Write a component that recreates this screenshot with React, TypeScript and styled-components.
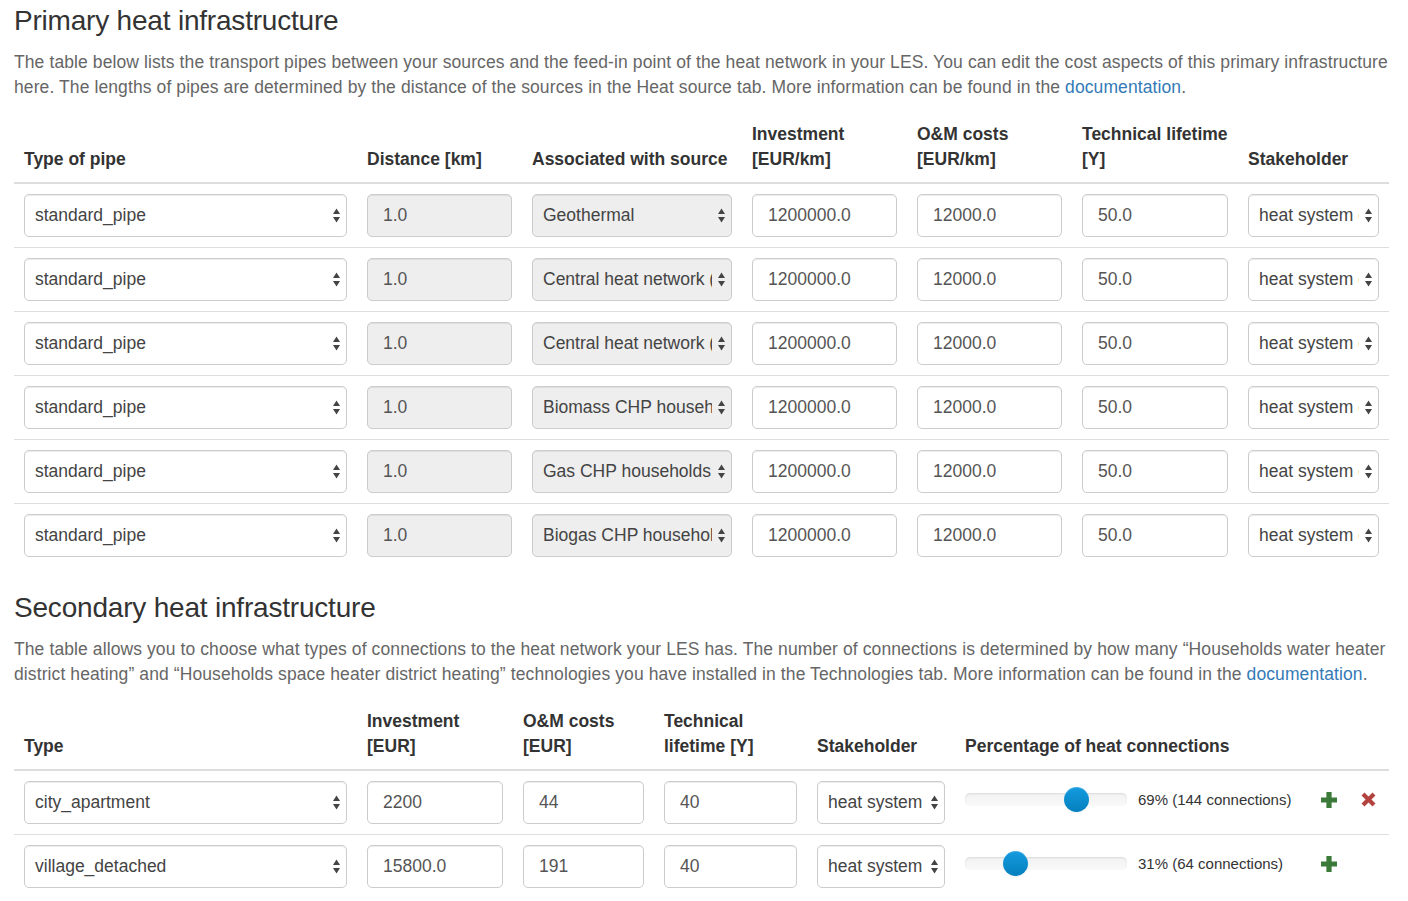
import React from "react";
import styled, { createGlobalStyle } from "styled-components";

const GlobalStyle = createGlobalStyle`
  html, body { margin: 0; padding: 0; background: #fff; }
  body {
    font-family: "Liberation Sans", Arial, Helvetica, sans-serif;
    font-size: 17.5px;
    line-height: 25px;
    color: #333;
  }
  * { box-sizing: border-box; }
`;

const Page = styled.div`
  padding: 4px 19px 0 14px;
`;

const Title = styled.h3`
  font-size: 28px;
  line-height: 33px;
  font-weight: 400;
  letter-spacing: -0.2px;
  color: #333;
  margin: 0 0 12.5px;
  white-space: nowrap;
`;

const Lead = styled.p`
  margin: 0 0 12.5px;
  color: #666;
  font-size: 17.5px;
  line-height: 25px;
  letter-spacing: 0.1px;
  white-space: nowrap;
`;

const Link = styled.a`
  color: #337ab7;
  text-decoration: none;
`;

const Table = styled.table`
  width: 100%;
  border-collapse: collapse;
  table-layout: fixed;
  margin: 0 0 24px;
`;

const Col = styled.col<{ $w?: number }>`
  width: ${(p) => (p.$w ? `${p.$w}px` : "auto")};
`;

const Th = styled.th`
  text-align: left;
  vertical-align: bottom;
  padding: 10px;
  border-bottom: 2px solid #ddd;
  font-weight: 700;
  line-height: 25px;
  color: #333;
  white-space: nowrap;
`;

const Td = styled.td`
  padding: 10px;
  border-top: 1px solid #ddd;
  vertical-align: middle;
`;

const TextInput = styled.input<{ $disabled?: boolean }>`
  display: block;
  width: 100%;
  height: 43px;
  padding: 0 15px;
  font-family: inherit;
  font-size: 17.5px;
  color: #555;
  background: ${(p) => (p.$disabled ? "#eee" : "#fff")};
  border: 1px solid #ccc;
  border-radius: 5px;
  box-shadow: inset 0 1px 1px rgba(0, 0, 0, 0.075);
  outline: none;
`;

const SelectBox = styled.div<{ $disabled?: boolean }>`
  display: flex;
  align-items: center;
  width: 100%;
  height: 43px;
  padding: 0 6px 0 10px;
  background: ${(p) => (p.$disabled ? "#eee" : "#fff")};
  border: 1px solid #ccc;
  border-radius: 5px;
  box-shadow: inset 0 1px 1px rgba(0, 0, 0, 0.075);
  color: #444;
  font-size: 17.5px;
`;

const SelectText = styled.span`
  flex: 1;
  min-width: 0;
  overflow: hidden;
  white-space: nowrap;
`;

const Arrows = styled.svg`
  flex: 0 0 auto;
  margin-left: 6px;
  display: block;
`;

const SliderRow = styled.div`
  display: flex;
  align-items: center;
  height: 43px;
  padding-bottom: 6px;
`;

const Track = styled.div`
  position: relative;
  flex: 0 0 162px;
  height: 13px;
  border-radius: 5px;
  background: linear-gradient(#f2f2f2, #f9f9f9);
  box-shadow: inset 0 1px 2px rgba(0, 0, 0, 0.1);
`;

const Thumb = styled.div`
  position: absolute;
  top: 50%;
  width: 25px;
  height: 25px;
  margin: -12.5px 0 0 -12.5px;
  border-radius: 50%;
  background: linear-gradient(#149bdf, #0480be);
  box-shadow: inset 0 1px 0 rgba(255, 255, 255, 0.2), 0 1px 2px rgba(0, 0, 0, 0.05);
`;

const ConnLabel = styled.span`
  flex: 0 0 172px;
  margin-left: 11px;
  font-size: 15px;
  color: #333;
  white-space: nowrap;
`;

const IconButton = styled.span<{ $gap: number }>`
  display: flex;
  margin-left: ${(p) => p.$gap}px;
  cursor: pointer;
`;

const SelectArrows = () => (
  <Arrows width="7" height="15" viewBox="0 0 7 15">
    <path d="M3.5 0.5 L7 6 H0 Z" fill="#444" />
    <path d="M3.5 14.5 L7 9 H0 Z" fill="#444" />
  </Arrows>
);

const Select = ({ value, disabled }: { value: string; disabled?: boolean }) => (
  <SelectBox $disabled={disabled}>
    <SelectText>{value}</SelectText>
    <SelectArrows />
  </SelectBox>
);

const PlusIcon = () => (
  <svg width="16" height="16" viewBox="0 0 16 16">
    <path d="M5.4 0h5.2v5.4H16v5.2h-5.4V16H5.4v-5.4H0V5.4h5.4z" fill="#3b7a39" />
  </svg>
);

const RemoveIcon = () => (
  <svg width="15" height="15" viewBox="0 0 15 15">
    <path d="M2 2 L13 13 M13 2 L2 13" stroke="#b2433f" strokeWidth="4.2" />
  </svg>
);

const primaryRows = [
  "Geothermal",
  "Central heat network (primary)",
  "Central heat network (secondary)",
  "Biomass CHP households",
  "Gas CHP households",
  "Biogas CHP households",
];

const secondaryRows = [
  { type: "city_apartment", inv: "2200", om: "44", life: "40", pct: 69, conn: 144, removable: true },
  { type: "village_detached", inv: "15800.0", om: "191", life: "40", pct: 31, conn: 64, removable: false },
];

export default function App() {
  return (
    <Page>
      <GlobalStyle />
      <Title>Primary heat infrastructure</Title>
      <Lead>
        The table below lists the transport pipes between your sources and the feed-in point of the heat network in your LES. You can edit the cost aspects of this primary infrastructure
        <br />
        here. The lengths of pipes are determined by the distance of the sources in the Heat source tab. More information can be found in the <Link href="#">documentation</Link>.
      </Lead>
      <Table>
        <colgroup>
          <Col $w={343} />
          <Col $w={165} />
          <Col $w={220} />
          <Col $w={165} />
          <Col $w={165} />
          <Col $w={166} />
          <Col />
        </colgroup>
        <thead>
          <tr>
            <Th>Type of pipe</Th>
            <Th>Distance [km]</Th>
            <Th>Associated with source</Th>
            <Th>
              Investment
              <br />
              [EUR/km]
            </Th>
            <Th>
              O&amp;M costs
              <br />
              [EUR/km]
            </Th>
            <Th>
              Technical lifetime
              <br />
              [Y]
            </Th>
            <Th>Stakeholder</Th>
          </tr>
        </thead>
        <tbody>
          {primaryRows.map((src, i) => (
            <tr key={i}>
              <Td>
                <Select value="standard_pipe" />
              </Td>
              <Td>
                <TextInput $disabled defaultValue="1.0" readOnly />
              </Td>
              <Td>
                <Select value={src} disabled />
              </Td>
              <Td>
                <TextInput defaultValue="1200000.0" />
              </Td>
              <Td>
                <TextInput defaultValue="12000.0" />
              </Td>
              <Td>
                <TextInput defaultValue="50.0" />
              </Td>
              <Td>
                <Select value="heat system operator" />
              </Td>
            </tr>
          ))}
        </tbody>
      </Table>

      <Title>Secondary heat infrastructure</Title>
      <Lead>
        The table allows you to choose what types of connections to the heat network your LES has. The number of connections is determined by how many “Households water heater
        <br />
        district heating” and “Households space heater district heating” technologies you have installed in the Technologies tab. More information can be found in the <Link href="#">documentation</Link>.
      </Lead>
      <Table>
        <colgroup>
          <Col $w={343} />
          <Col $w={156} />
          <Col $w={141} />
          <Col $w={153} />
          <Col $w={148} />
          <Col />
        </colgroup>
        <thead>
          <tr>
            <Th>Type</Th>
            <Th>
              Investment
              <br />
              [EUR]
            </Th>
            <Th>
              O&amp;M costs
              <br />
              [EUR]
            </Th>
            <Th>
              Technical
              <br />
              lifetime [Y]
            </Th>
            <Th>Stakeholder</Th>
            <Th>Percentage of heat connections</Th>
          </tr>
        </thead>
        <tbody>
          {secondaryRows.map((r) => (
            <tr key={r.type}>
              <Td>
                <Select value={r.type} />
              </Td>
              <Td>
                <TextInput defaultValue={r.inv} />
              </Td>
              <Td>
                <TextInput defaultValue={r.om} />
              </Td>
              <Td>
                <TextInput defaultValue={r.life} />
              </Td>
              <Td>
                <Select value="heat system operator" />
              </Td>
              <Td>
                <SliderRow>
                  <Track>
                    <Thumb style={{ left: `${r.pct}%` }} />
                  </Track>
                  <ConnLabel>
                    {r.pct}% ({r.conn} connections)
                  </ConnLabel>
                  <IconButton $gap={11}>
                    <PlusIcon />
                  </IconButton>
                  {r.removable && (
                    <IconButton $gap={24}>
                      <RemoveIcon />
                    </IconButton>
                  )}
                </SliderRow>
              </Td>
            </tr>
          ))}
        </tbody>
      </Table>
    </Page>
  );
}
